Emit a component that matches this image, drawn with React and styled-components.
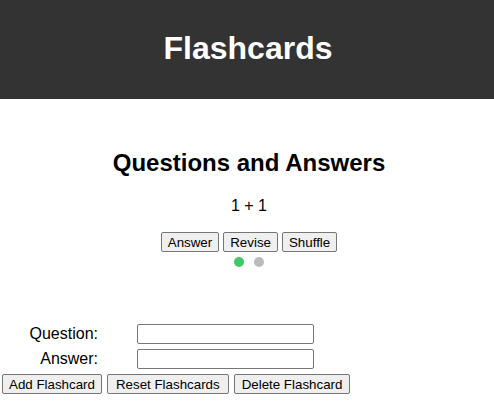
import React from "react"
import styled, { createGlobalStyle } from "styled-components"

const GlobalStyle = createGlobalStyle`
    body {
        margin: 0;
        font-family: "Liberation Sans", Arial, sans-serif;
        background: white;
        color: black;
    }
`

const Header = styled.header`
    background-color: #333333;
    height: 99px;
    display: flex;
    align-items: center;
    justify-content: center;
    padding-left: 2px;
`
const Title = styled.h1`
    color: white;
    font-size: 32px;
    font-weight: 700;
    margin: 0;
    padding-bottom: 2px;
`
const Main = styled.main`
    display: flex;
    flex-direction: column;
    align-items: center;
    padding-left: 4px;
`
const Heading = styled.h2`
    font-size: 24px;
    font-weight: 700;
    margin: 50px 0 0;
    line-height: 28px;
`
const Question = styled.p`
    font-size: 16px;
    line-height: 18px;
    margin: 20px 0 0;
`
const ButtonRow = styled.div`
    display: flex;
    gap: ${p => p.$gap || 4}px;
    margin-top: ${p => p.$top || 0}px;
    padding-left: ${p => p.$left || 0}px;
`
const Button = styled.button`
    font-family: "Liberation Sans", Arial, sans-serif;
    font-size: 13.333px;
    height: 20px;
    padding: 0 ${p => p.$pad || 6}px;
    background: #efefef;
    border: 1px solid #767676;
    border-radius: 2px;
    color: black;
`
const Dots = styled.div`
    display: flex;
    gap: 10px;
    margin-top: 5px;
`
const Dot = styled.span`
    width: 10px;
    height: 10px;
    border-radius: 50%;
    background: ${p => (p.$active ? "#43c866" : "#bbbbbb")};
`
const Form = styled.form`
    margin-top: 57px;
    display: flex;
    flex-direction: column;
    gap: 5px;
`
const Fields = styled.div`
    display: grid;
    grid-template-columns: 98px 177px;
    column-gap: 39px;
    row-gap: 5px;
    align-items: center;
`
const Label = styled.label`
    font-size: 16px;
    text-align: right;
`
const Input = styled.input`
    box-sizing: border-box;
    width: 177px;
    height: 20px;
    border: 1px solid #767676;
    border-radius: 2px;
    padding: 1px 2px;
`

export default function App() {
    return (
        <>
            <GlobalStyle />
            <Header>
                <Title>Flashcards</Title>
            </Header>
            <Main>
                <Heading>Questions and Answers</Heading>
                <Question>1 + 1</Question>
                <ButtonRow $top={17}>
                    <Button>Answer</Button>
                    <Button>Revise</Button>
                    <Button>Shuffle</Button>
                </ButtonRow>
                <Dots>
                    <Dot $active />
                    <Dot />
                </Dots>
            </Main>
            <Form onSubmit={e => e.preventDefault()}>
                <Fields>
                    <Label htmlFor="q">Question:</Label>
                    <Input id="q" type="text" />
                    <Label htmlFor="a">Answer:</Label>
                    <Input id="a" type="text" />
                </Fields>
                <ButtonRow $left={2} $gap={5}>
                    <Button type="button">Add Flashcard</Button>
                    <Button type="button" $pad={8}>Reset Flashcards</Button>
                    <Button type="button" $pad={7}>Delete Flashcard</Button>
                </ButtonRow>
            </Form>
        </>
    )
}
